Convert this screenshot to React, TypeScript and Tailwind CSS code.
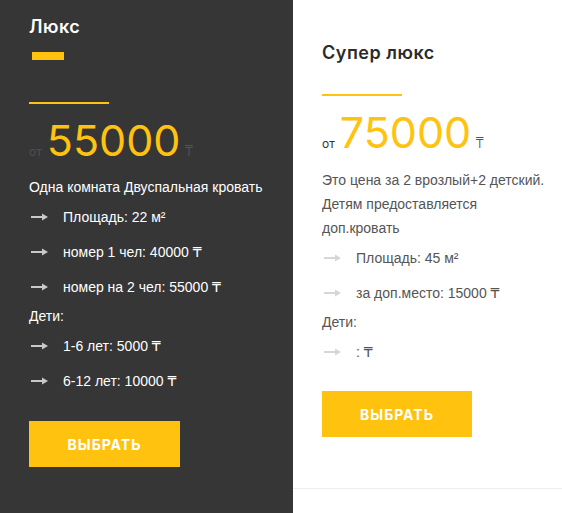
const Arrow = ({ color }: { color: string }) => (
  <svg width="17" height="8" viewBox="0 0 17 8" className="shrink-0">
    <rect x="0" y="3" width="12" height="2" fill={color} />
    <polygon points="11,0.5 17,4 11,7.5" fill={color} />
  </svg>
);

const Item = ({ text, dark }: { text: string; dark: boolean }) => (
  <li className="flex items-center py-[5.5px] leading-[24px]">
    <span className="ml-[2px] mr-[15px] flex items-center">
      <Arrow color={dark ? "#c9c9c9" : "#d6d6d6"} />
    </span>
    <span>{text}</span>
  </li>
);

const App = () => {
  const head = { fontFamily: "Inter, 'Noto Sans', 'DejaVu Sans', sans-serif" };
  const body = { fontFamily: "'Liberation Sans', 'DejaVu Sans', sans-serif" };

  return (
    <div className="flex h-[513px] w-[562px] overflow-hidden bg-white">
      {/* featured card */}
      <div className="w-[293px] shrink-0 bg-[#363636] pl-[29px] pt-[16px]">
        <h3 className="text-[18px] font-semibold leading-[22px] tracking-[0.5px] text-white" style={head}>
          Люкс
        </h3>
        <div className="ml-[3px] mt-[14px] h-2 w-8 bg-[#ffc30f]" />
        <div className="mt-[42px] h-[2px] w-20 bg-[#ffc30f]" />
        <div className="mt-[15px] flex h-[43px] items-baseline" style={head}>
          <span className="text-[12px] leading-none text-[#505050]">от</span>
          <span className="ml-[5px] text-[43px] font-normal leading-[43px] text-[#ffc30f]">55000</span>
          <span className="ml-[4px] text-[14px] font-light leading-none text-[#555555]">₸</span>
        </div>
        <div className="text-[14px] text-white" style={body}>
          <p className="mt-[13px] leading-[24px]">Одна комната Двуспальная кровать</p>
          <ul>
            <Item dark text="Площадь: 22 м²" />
            <Item dark text="номер 1 чел: 40000 ₸" />
            <Item dark text="номер на 2 чел: 55000 ₸" />
          </ul>
          <p className="leading-[24px]">Дети:</p>
          <ul>
            <Item dark text="1-6 лет: 5000 ₸" />
            <Item dark text="6-12 лет: 10000 ₸" />
          </ul>
        </div>
        <button
          className="mt-[23px] flex h-[46px] w-[151px] items-center justify-center bg-[#ffc30f] text-[14px] font-bold tracking-[1px] text-white"
          style={head}
        >
          ВЫБРАТЬ
        </button>
      </div>

      {/* regular card */}
      <div className="flex-1 self-start border-b border-[#eeeeee] pb-[51px] pl-[29px] pt-[42px]">
        <h3 className="text-[18px] font-semibold leading-[22px] tracking-[0.5px] text-[#2b2b2b]" style={head}>
          Супер люкс
        </h3>
        <div className="mt-[30px] h-[2px] w-20 bg-[#ffc30f]" />
        <div className="mt-[15px] flex h-[43px] items-baseline" style={head}>
          <span className="text-[12px] leading-none text-[#333333]">от</span>
          <span className="ml-[5px] text-[43px] font-normal leading-[43px] text-[#ffc30f]">75000</span>
          <span className="ml-[4px] text-[14px] font-light leading-none text-[#555555]">₸</span>
        </div>
        <div className="text-[14px] text-[#555555]" style={body}>
          <p className="mt-[14px] w-[228px] leading-[24px]">
            Это цена за 2 врозлый+2 детский. Детям предоставляется доп.кровать
          </p>
          <ul>
            <Item dark={false} text="Площадь: 45 м²" />
            <Item dark={false} text="за доп.место: 15000 ₸" />
          </ul>
          <p className="leading-[24px]">Дети:</p>
          <ul>
            <Item dark={false} text=": ₸" />
          </ul>
        </div>
        <button
          className="mt-[22px] flex h-[46px] w-[150px] items-center justify-center bg-[#ffc30f] text-[14px] font-bold tracking-[1px] text-white"
          style={head}
        >
          ВЫБРАТЬ
        </button>
      </div>
    </div>
  );
};

export default App;
